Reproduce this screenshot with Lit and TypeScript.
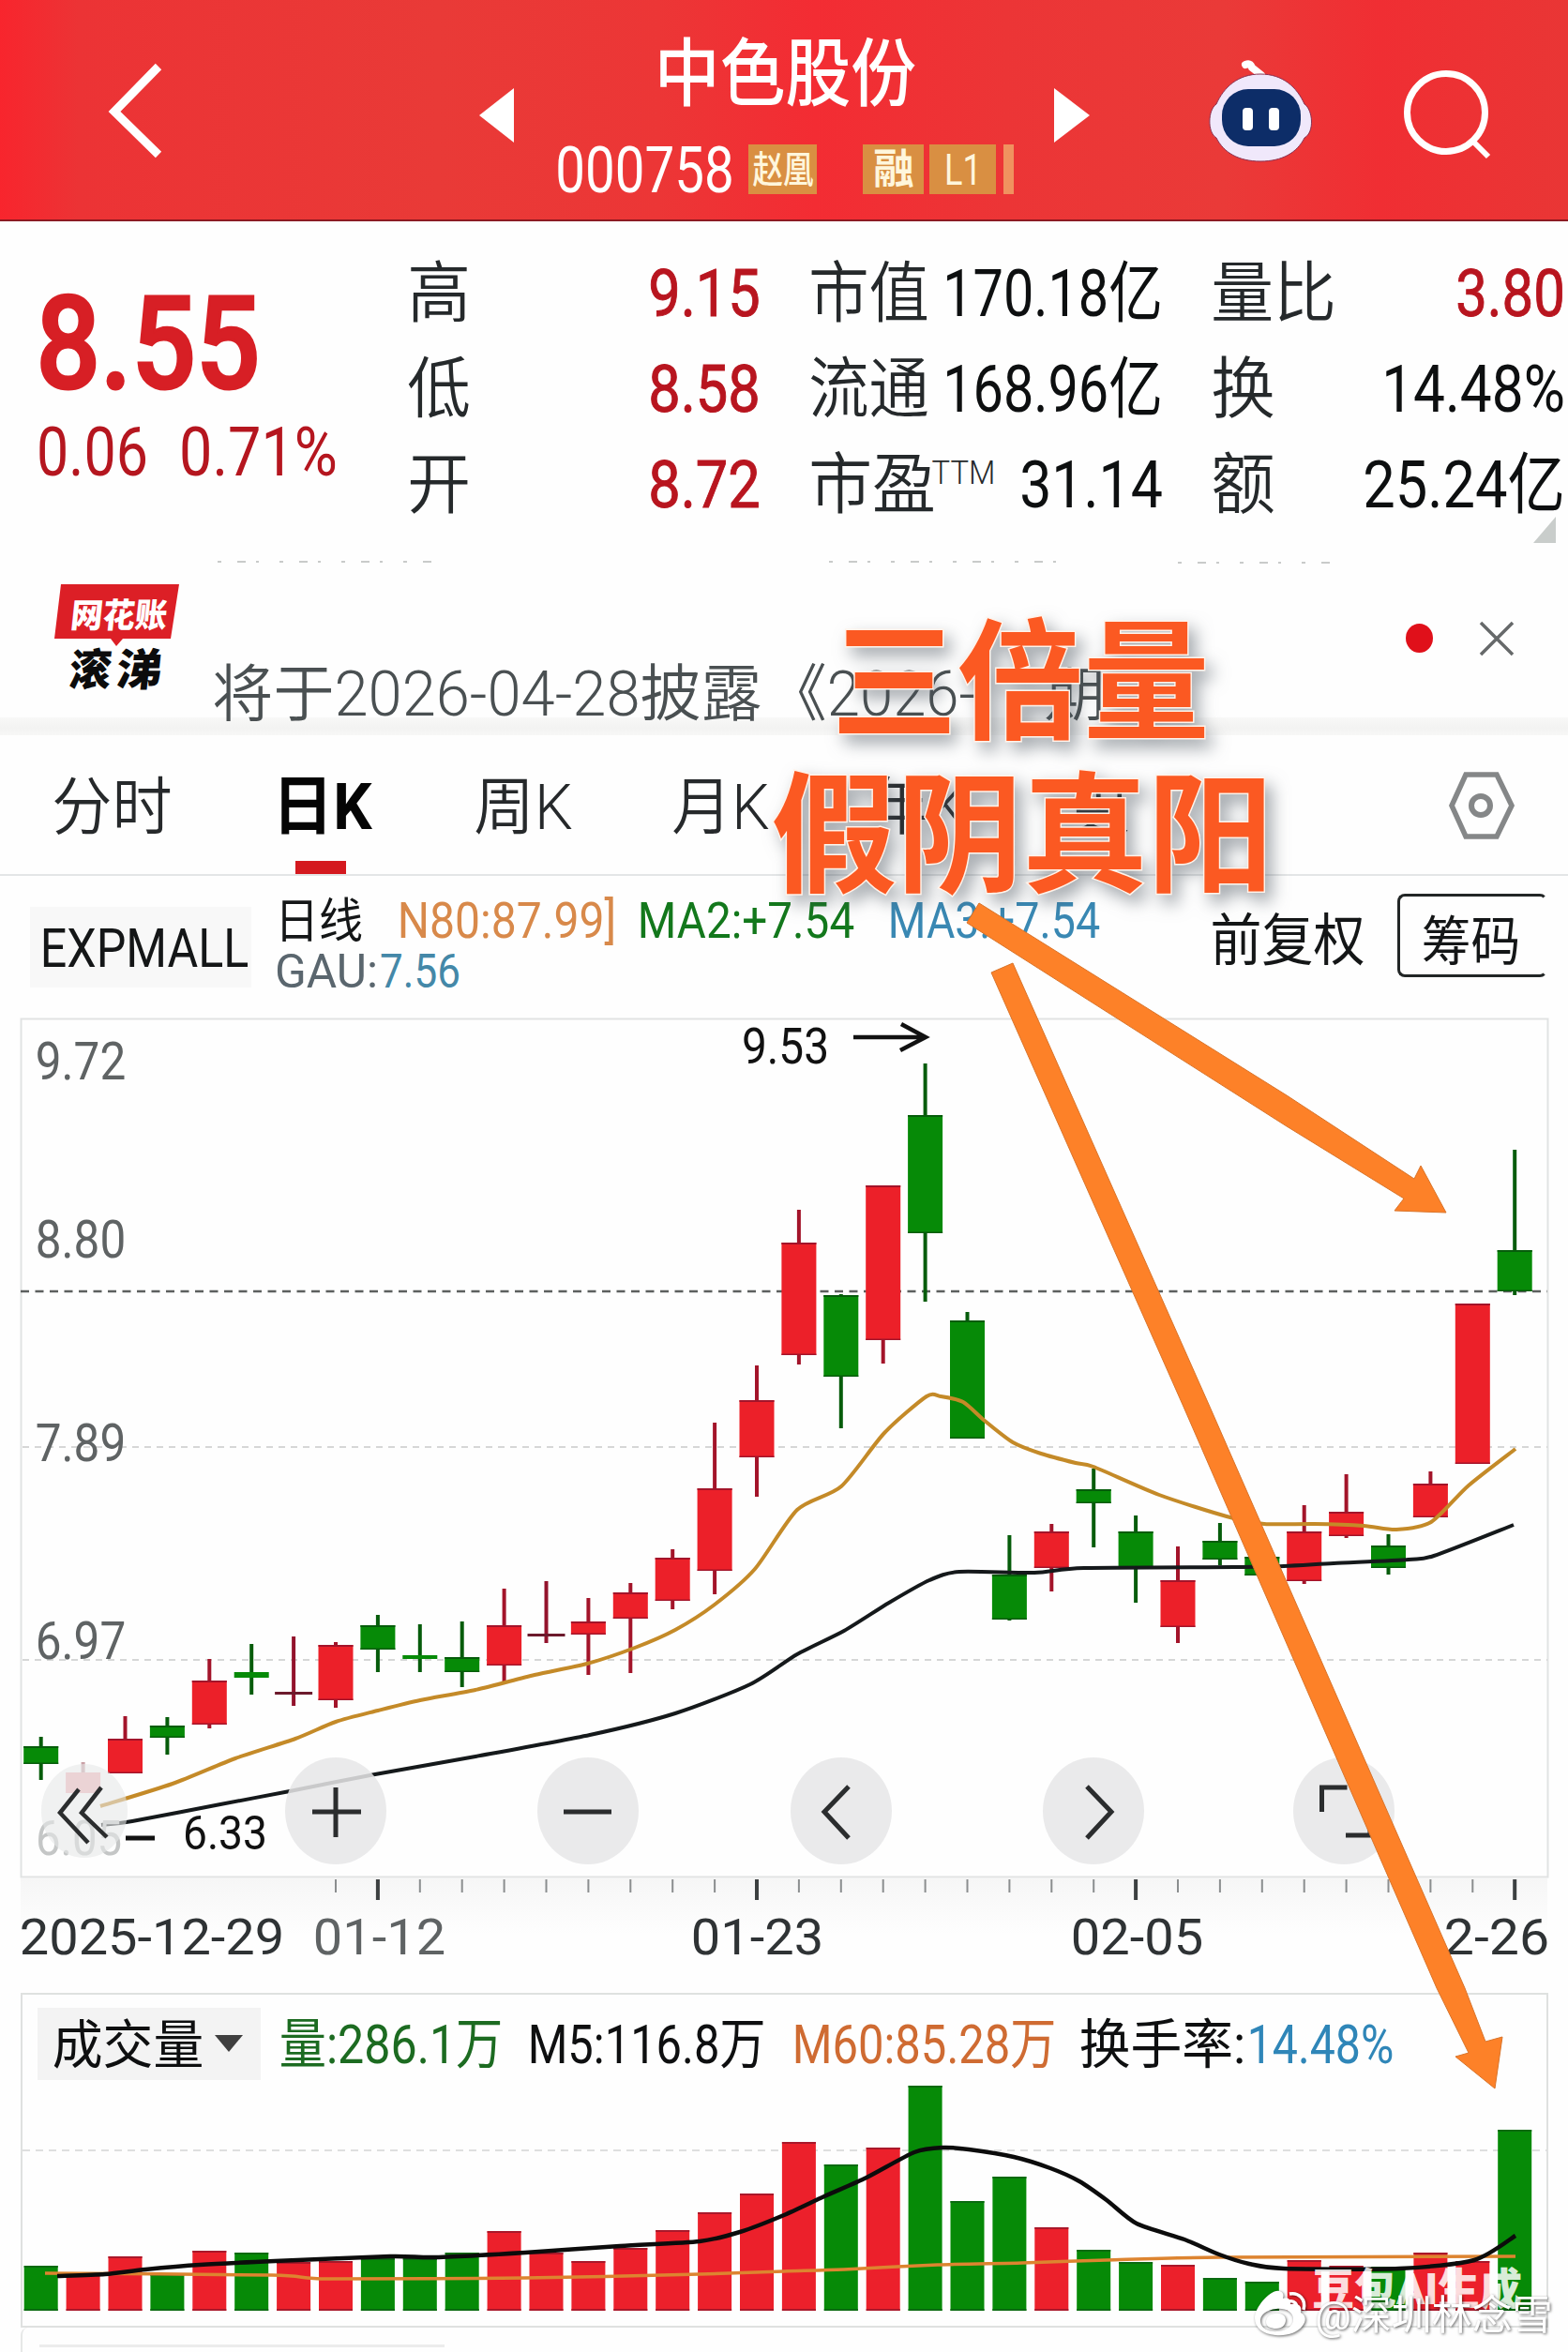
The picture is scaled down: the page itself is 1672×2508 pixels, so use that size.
import { LitElement, html, svg, css } from "lit";
import { customElement } from "lit/decorators.js";

/* Text whose ink fills a given width; the box ends on the baseline. */
const label = (text: string, w: number, size: number, cls = "") => {
  const h = Math.round(size * 0.711);
  const b = size * 0.04;
  return html`<svg class="label ${cls}" width=${w} height=${h} viewBox="0 0 ${w} ${h}">
    <text x=${-b} y=${h} font-size=${size} textLength=${w + 2 * b} lengthAdjust="spacingAndGlyphs">${text}</text>
  </svg>`;
};

const mark = (text: string, x: number, y: number, w: number, size: number, cls = "") => {
  const b = size * 0.04;
  return svg`<text class=${cls} x=${x - b} y=${y} font-size=${size} textLength=${w + 2 * b} lengthAdjust="spacingAndGlyphs">${text}</text>`;
};

type Candle = [string, number, number, number, number];
// colour, high, body top, body bottom, low
const candles: Candle[] = [
  ["g", 1851, 1861, 1880, 1897], ["f", 1878, 1889, 1911, 1911], ["r", 1829, 1853, 1890, 1890],
  ["g", 1830, 1839, 1852, 1870], ["r", 1768, 1791, 1838, 1842], ["g", 1752, 1782, 1788, 1806],
  ["d", 1744, 1803, 1806, 1818], ["r", 1750, 1753, 1812, 1820], ["g", 1721, 1732, 1758, 1782],
  ["g", 1731, 1764, 1768, 1782], ["g", 1728, 1766, 1782, 1798], ["r", 1693, 1732, 1775, 1792],
  ["d", 1685, 1741, 1744, 1751], ["r", 1703, 1728, 1742, 1785], ["r", 1687, 1697, 1725, 1783],
  ["r", 1651, 1660, 1706, 1715], ["r", 1516, 1586, 1674, 1699], ["r", 1455, 1492, 1553, 1595],
  ["r", 1289, 1324, 1444, 1454], ["g", 1379, 1380, 1467, 1522], ["r", 1263, 1263, 1428, 1453],
  ["g", 1133, 1188, 1314, 1387], ["g", 1398, 1407, 1533, 1533], ["g", 1636, 1678, 1726, 1727],
  ["r", 1624, 1632, 1671, 1696], ["g", 1565, 1587, 1602, 1649], ["g", 1615, 1632, 1672, 1708],
  ["r", 1648, 1684, 1734, 1751], ["g", 1623, 1642, 1662, 1668], ["g", 1657, 1659, 1679, 1679],
  ["r", 1604, 1632, 1685, 1688], ["r", 1571, 1611, 1637, 1639], ["g", 1635, 1647, 1671, 1678],
  ["r", 1568, 1581, 1617, 1617], ["r", 1389, 1389, 1560, 1560], ["g", 1225, 1332, 1376, 1380],
];
const volumes: [string, number][] = [
  ["g", 2415], ["r", 2423], ["r", 2405], ["g", 2424], ["r", 2399], ["g", 2401], ["r", 2411], ["r", 2410],
  ["g", 2407], ["g", 2407], ["g", 2401], ["r", 2378], ["r", 2401], ["r", 2410], ["r", 2396], ["r", 2377],
  ["r", 2358], ["r", 2338], ["r", 2283], ["g", 2307], ["r", 2289], ["g", 2223], ["g", 2346], ["g", 2320],
  ["r", 2374], ["g", 2398], ["g", 2411], ["r", 2414], ["g", 2428], ["g", 2432], ["r", 2409], ["r", 2415],
  ["g", 2416], ["r", 2401], ["r", 2410], ["g", 2270],
];
const cx = (i: number) => 43.7 + i * 44.9;

/* Smooth curve through the points (Catmull-Rom). */
const curve = (p: number[][]) => {
  let d = `M${p[0][0]} ${p[0][1]}`;
  for (let i = 0; i < p.length - 1; i++) {
    const a = p[Math.max(0, i - 1)], b = p[i], c = p[i + 1], e = p[Math.min(p.length - 1, i + 2)];
    const k = 8;
    d += `C${b[0] + (c[0] - a[0]) / k} ${b[1] + (c[1] - a[1]) / k} ${c[0] - (e[0] - b[0]) / k} ${c[1] - (e[1] - b[1]) / k} ${c[0]} ${c[1]}`;
  }
  return d;
};
const fastLine = curve([[107, 1925], [184, 1901], [251, 1874], [315, 1853], [358, 1835], [403, 1823], [448, 1812], [507, 1801], [570, 1785], [626, 1773], [677, 1756], [720, 1737], [762, 1710], [805, 1672], [850, 1609], [897, 1584], [943, 1527], [988, 1488], [1003, 1488], [1027, 1494], [1050, 1514], [1080, 1537], [1110, 1549], [1147, 1559], [1166, 1563], [1236, 1593], [1308, 1616], [1348, 1624], [1401, 1624], [1454, 1626], [1489, 1630], [1526, 1622], [1566, 1583], [1616, 1544]]);
const slowLine = curve([[108, 1945], [141, 1941], [235, 1923], [309, 1909], [400, 1891], [507, 1872], [629, 1849], [720, 1826], [800, 1795], [850, 1763], [900, 1738], [948, 1708], [991, 1684], [1023, 1675], [1103, 1676], [1156, 1671], [1316, 1670], [1369, 1669], [1422, 1666], [1502, 1662], [1529, 1658], [1614, 1625]]);
const vol5 = curve([[61, 2426], [112, 2424], [155, 2419], [213, 2414], [293, 2410], [416, 2405], [464, 2406], [560, 2401], [661, 2394], [746, 2389], [789, 2379], [836, 2361], [879, 2341], [924, 2321], [975, 2294], [1005, 2289], [1033, 2291], [1081, 2299], [1120, 2311], [1151, 2325], [1180, 2345], [1212, 2370], [1263, 2387], [1300, 2403], [1332, 2413], [1369, 2418], [1492, 2418], [1572, 2409], [1616, 2383]]);
const vol60 = curve([[48, 2423], [290, 2425], [350, 2429], [560, 2428], [746, 2424], [836, 2421], [900, 2419], [1000, 2414], [1090, 2412], [1180, 2409], [1300, 2406], [1616, 2405]]);

const shared = css`
  :host { display: block; font-family: Roboto, "Noto Sans CJK SC", sans-serif; }
  svg { display: block; flex: none; overflow: visible; }
  text { fill: currentColor; white-space: pre; }
  .label { font-weight: 400; }
  .med { font-weight: 500; }
  .bold { font-weight: 700; }
  .black { font-weight: 900; }
  .light { font-weight: 350; }
`;

@customElement("stock-header")
class StockHeader extends LitElement {
  static styles = [shared, css`
    .bar { display: flex; align-items: center; height: 236px; padding: 6px 0 2px 110px; box-sizing: border-box; color: #fff;
      border-bottom: 2px solid #8d1a22;
      background: linear-gradient(90deg, #f8252d 0, #ec3335 5%, #e93a37 28%, #ec3636 42%, #f32c33 52%, #ec3536 64%, #ea3a38 78%, #f02e33 88%, #e93635 100%); }
    .prev { margin-left: 326px; }
    .title { margin-left: 43px; width: 486px; height: 174px; padding-top: 19px; box-sizing: border-box; }
    .name { margin-left: 106px; }
    .row { display: flex; margin-top: 47px; height: 53px; align-items: center; }
    .row .code { margin-top: 1px; }
    .tag { background: #d98f42; height: 53px; display: flex; align-items: center; justify-content: center; color: #fff6dc; }
    .t1 { width: 73px; margin-left: 18px; }
    .t2 { width: 65px; margin-left: 49px; }
    .t3 { width: 71px; margin-left: 6px; }
    .t4 { width: 11px; margin-left: 8px; background: #f0925f; }
    .next { margin-left: 39px; }
    .robot { margin-left: 122px; }
    .search { margin-left: 90px; }
  `];
  render() {
    return html`<div class="bar">
      <svg width="70" height="112" viewBox="110 64 70 112" fill="none" stroke="#fff" stroke-width="9"><path d="M169 72 122 120l47 46"/></svg>
      <svg class="prev" width="46" height="72" viewBox="506 84 46 72"><path fill="#fff" d="M511 124 548 95v58z"/></svg>
      <div class="title">
        <div class="name">${label("中色股份", 273, 79, "med")}</div>
        <div class="row">
          <div class="code">${label("000758", 185, 68)}</div>
          <div class="tag t1">${label("赵凰", 62, 40, "med")}</div>
          <div class="tag t2">${label("融", 40, 44, "bold")}</div>
          <div class="tag t3">${label("L1", 36, 47)}</div>
          <div class="tag t4"></div>
        </div>
      </div>
      <svg class="next" width="46" height="72" viewBox="1120 84 46 72"><path fill="#fff" d="M1162 124 1124 95v58z"/></svg>
      <svg class="robot" width="114" height="120" viewBox="1290 60 114 120">
        <path d="M1330 70q5-2 7 3l10 8" fill="none" stroke="#fff" stroke-width="8" stroke-linecap="round"/>
        <path d="M1346 80c24 0 39 14 47 32 9 6 11 30 0 36-8 16-24 25-47 25s-39-9-47-25c-10-6-9-30 0-36 8-18 23-32 47-32z" fill="#f0e8fb" stroke="#8a3050" stroke-width="1"/>
        <rect x="1305" y="96" width="84" height="61" rx="28" fill="#0d2d68"/>
        <rect x="1327" y="116" width="11" height="24" rx="4" fill="#fff"/><rect x="1355" y="116" width="11" height="24" rx="4" fill="#fff"/>
      </svg>
      <svg class="search" width="100" height="100" viewBox="1494 70 100 100" fill="none" stroke="#fff">
        <circle cx="1544" cy="121" r="41.500" stroke-width="7"/><path d="M1572 151l17 17" stroke-width="6"/>
      </svg>
    </div>`;
  }
}

@customElement("quote-panel")
class QuotePanel extends LitElement {
  static styles = [shared, css`
    .panel { display: flex; height: 354px; padding-left: 42px; box-sizing: border-box; color: #0d0f10; }
    .price { width: 395px; padding-top: 80px; box-sizing: border-box; color: #b5161f; }
    .big { color: #d71f25; margin-left: 2px; }
    .big .label { stroke: #d71f25; stroke-width: 3px; }
    .chg { display: flex; gap: 39px; margin-top: 42px; }
    .col { display: grid; grid-template-rows: 101px 102px 102px; margin-right: 57px; }
    .c1 { width: 371px; } .c2 { width: 372px; } .c3 { width: 372px; margin-right: 0; }
    .row { display: flex; justify-content: space-between; align-items: flex-end; }
    .row .k { display: flex; align-items: flex-start; color: #25292b; }
    .red { color: #b8151f; stroke: #b8151f; stroke-width: 1px; }
    .corner { margin: 10px 7px 0 auto; }
  `];
  render() {
    const row = (k: unknown, v: unknown) => html`<div class="row"><div class="k">${k}</div>${v}</div>`;
    return html`<div class="panel">
      <div class="price">
        <div class="big">${label("8.55", 228, 138, "med")}</div>
        <div class="chg">${label("0.06", 113, 72)}${label("0.71%", 163, 72)}</div>
      </div>
      <div class="col c1">
        ${row(label("高", 62, 71, "light"), label("9.15", 114, 71, "red"))}
        ${row(label("低", 62, 71, "light"), label("8.58", 114, 71, "red"))}
        ${row(label("开", 62, 71, "light"), label("8.72", 114, 71, "red"))}
      </div>
      <div class="col c2">
        ${row(label("市值", 123, 71, "light"), label("170.18亿", 229, 71))}
        ${row(label("流通", 123, 71, "light"), label("168.96亿", 229, 71))}
        ${row(html`${label("市盈", 130, 71, "light")}${label("TTM", 65, 35, "light")}`, label("31.14", 147, 71))}
      </div>
      <div class="col c3">
        ${row(label("量比", 128, 71, "light"), label("3.80", 111, 71, "red"))}
        ${row(label("换", 63, 71, "light"), label("14.48%", 190, 71))}
        ${row(label("额", 63, 71, "light"), label("25.24亿", 210, 71))}
        <svg class="corner" width="24" height="28"><path d="M24 0v28H0z" fill="#c9cdcb"/></svg>
      </div>
    </div>`;
  }
}

@customElement("news-strip")
class NewsStrip extends LitElement {
  static styles = [shared, css`
    .strip { display: flex; align-items: flex-end; height: 175px; padding-left: 56px; box-sizing: border-box; color: #4a5052; }
    .logo { margin-bottom: 27px; }
    .a { margin: 0 11px 2px 37px; }
    .b { margin: 0 77px 2px 0; }
    .c { margin-bottom: 2px; }
    .dot { width: 29px; height: 31px; border-radius: 50%; background: #e0101a; margin: 0 67px 69px 323px; }
    .close { margin-bottom: 66px; }
    .band { height: 19px; background: linear-gradient(#f8f8f7, #f3f3f2 60%, #f7f7f6); }
  `];
  render() {
    return html`<div class="strip">
      <svg class="logo" width="136" height="118" viewBox="56 620 136 118">
        <path d="M232 599H460M884 599h246M1256 600h170" stroke="#c9cbca" stroke-width="2" stroke-dasharray="4 17 9 11 3 22"/>
        <path d="M65 623H191L182 681H131L124 689 118 681H58z" fill="#dc1f26"/>
        <g transform="skewX(-6)" >
          <g color="#fff">${mark("网花账", 146, 669, 100, 36, "black")}</g>
          <g color="#0c0c0c">${mark("滚", 151, 731, 41, 47, "black")}${mark("涕", 201, 731, 45, 47, "black")}</g>
        </g>
      </svg>
      <div class="a">${label("将于2026-04-28披露", 581, 66, "light")}</div>
      <div class="b">${label("《2026-", 217, 66, "light")}</div>
      <div class="c">${label("期", 61, 62, "light")}</div>
      <div class="dot"></div>
      <svg class="close" width="36" height="36" stroke="#66696a" stroke-width="3.500"><path d="M1 1 35 35M35 1 1 35" transform="translate(-17 0)"/></svg>
    </div><div class="band"></div>`;
  }
}

@customElement("period-tabs")
class PeriodTabs extends LitElement {
  static styles = [shared, css`
    .tabs { display: flex; align-items: flex-end; height: 150px; padding: 0 58px 48px 58px; box-sizing: border-box; border-bottom: 2px solid #e3e5e6; color: #26292b; }
    .tab { margin-right: 111px; }
    .on { color: #050505; margin-right: 114px; display: flex; flex-direction: column; height: 49px; }
    .on::after { content: ""; flex: none; width: 54px; height: 14px; background: #d4191f; margin: 34px 0 0 22px; }
    .t1 { margin-right: 112px; }
    .set { margin: 0 0 -11px auto; }
  `];
  render() {
    return html`<div class="tabs">
      <div class="tab t1">${label("分时", 123, 67, "light")}</div>
      <div class="on">${label("日K", 101, 69, "bold")}</div>
      <div class="tab">${label("周K", 100, 67, "light")}</div>
      <div class="tab">${label("月K", 99, 67, "light")}</div>
      <div class="tab">${label("年K", 100, 67, "light")}</div>
      <div class="more">${label("更", 62, 67, "light")}</div>
      <svg class="set" width="70" height="72" viewBox="1546 823 70 72" fill="none" stroke="#858788">
        <path d="M1565 826h33l16 33-16 33h-33l-15-33z" stroke-width="5.500"/><circle cx="1581" cy="859" r="10" stroke-width="6"/>
      </svg>
    </div>`;
  }
}

@customElement("indicator-bar")
class IndicatorBar extends LitElement {
  static styles = [shared, css`
    .bar { display: flex; align-items: flex-start; height: 151px; padding: 19px 22px 0 32px; box-sizing: border-box; color: #141617; }
    .pill { margin-top: 14px; width: 236px; height: 86px; padding: 23px 0 0 13px; box-sizing: border-box; background: #f8f8f8; }
    .mas { margin-left: 27px; width: 876px; }
    .top, .sub { display: flex; align-items: flex-end; }
    .top { height: 47px; }
    .o { color: #d8894a; margin-left: 41px; } .g { color: #13781c; margin-left: 27px; } .b { color: #3988b3; margin-left: 40px; }
    .sub { margin-top: 17px; }
    .gau { color: #5a666e; margin-right: 6px; } .gv { color: #4488a8; }
    .adj { margin: 28px 37px 0 122px; }
    .chip { width: 160px; height: 89px; box-sizing: border-box; border: 3px solid #222626; border-right-color: transparent; border-radius: 8px; padding: 27px 0 0 25px; }
  `];
  render() {
    return html`<div class="bar">
      <div class="pill">${label("EXPMALL", 218, 57)}</div>
      <div class="mas">
        <div class="top">${label("日线", 90, 51)}<div class="o">${label("N80:87.99]", 229, 54)}</div><div class="g">${label("MA2:+7.54", 227, 54)}</div><div class="b">${label("MA3:+7.54", 222, 54)}</div></div>
        <div class="sub"><div class="gau">${label("GAU:", 106, 50)}</div><div class="gv">${label("7.56", 82, 50)}</div></div>
      </div>
      <div class="adj">${label("前复权", 160, 60)}</div>
      <div class="chip">${label("筹码", 101, 57)}</div>
    </div>`;
  }
}

@customElement("candle-chart")
class CandleChart extends LitElement {
  static styles = [shared, css`
    .r { fill: #ec2029; } .g { fill: #068a07; } .f { fill: #f3b3ba; } .d { fill: #6c1a2c; }
    .wr { fill: #a3142a; } .wg { fill: #065c0b; } .wf { fill: #c9a0a6; } .wd { fill: #93132c; }
    .axis { color: #5f6364; } .date { color: #2f3335; } .ink { color: #111; } .faint { color: #c4c6c6; }
  `];
  render() {
    const bodyWidth = (c: string) => (c === "d" ? 40 : 37);
    return html`<svg width="1672" height="1040" viewBox="0 1084 1672 1040">
      <defs><linearGradient id="fade" x1="0" y1="0" x2="0" y2="1"><stop offset="0" stop-color="#f6f6f6"/><stop offset="1" stop-color="#fefefe"/></linearGradient></defs>
      <rect x="22" y="2002" width="1628" height="60" fill="url(#fade)"/>
      <rect x="22.500" y="1085.500" width="1628" height="915" fill="none" stroke="#e1e3e3" stroke-width="2"/>
      <path d="M24 1542H1650M24 1769H1650" stroke="#d6d7d7" stroke-width="2" stroke-dasharray="7 6"/>
      <path d="M22 1376H1650" stroke="#5d605f" stroke-width="2.500" stroke-dasharray="9 6.500"/>
      ${candles.map(([c, hi, t, b, lo], i) => svg`
        <rect class="w${c}" x=${cx(i) - 2} y=${hi} width="4" height=${lo - hi}/>
        <rect class=${c} x=${cx(i) - bodyWidth(c) / 2} y=${t} width=${bodyWidth(c)} height=${b - t}/>
        ${b - t > 8 && c !== "f" ? svg`<rect class="w${c}" x=${cx(i) - 18.5} y=${t} width="37" height="2"/><rect class="w${c}" x=${cx(i) - 18.5} y=${b - 1.5} width="37" height="1.500"/>` : ""}`)}
      <path d=${slowLine} fill="none" stroke="#15191b" stroke-width="4"/>
      <path d=${fastLine} fill="none" stroke="#c48a28" stroke-width="4"/>
      <g class="axis">
        ${mark("9.72", 40, 1150, 92, 55)}${mark("8.80", 40, 1340, 92, 55)}${mark("7.89", 40, 1557, 92, 55)}${mark("6.97", 40, 1768, 92, 55)}
      </g>
      <g class="faint">${mark("6.05", 40, 1977, 88, 52)}</g>
      <path d="M134 1959h31" stroke="#111" stroke-width="5"/>
      <g class="ink">${mark("6.33", 197, 1971, 86, 50)}${mark("9.53", 793, 1133, 89, 53)}</g>
      <path d="M910 1105h76M961 1091l26 14-27 14" fill="none" stroke="#111" stroke-width="4.500"/>
      <g fill="#e6e7e8" fill-opacity=".86">
        <ellipse cx="90" cy="1930" rx="46" ry="50" fill-opacity=".6"/>
        ${[358, 627, 897, 1166, 1433].map((x) => svg`<ellipse cx=${x} cy="1930" rx="54" ry="57"/>`)}
      </g>
      <g fill="none" stroke="#2b2d2e" stroke-width="5">
        <path d="M84 1907 64 1932 94 1964M108 1905 87 1932 114 1958" stroke-width="4.500"/>
        <path d="M333 1931h52M358 1905v53M601 1931h51M905 1904 879 1931 905 1959M1159 1904l26 27-26 28M1409.500 1931v-26h27M1435 1956h26v-26" stroke-width="5"/>
      </g>
      ${Array.from({ length: 29 }, (_, k) => k + 7).map((i) => {
        const major = (i + 1) % 9 === 0;
        return svg`<rect x=${cx(i) - (major ? 2 : 1)} y="2003" width=${major ? 4 : 2} height=${major ? 22 : 14} fill=${major ? "#3c4041" : "#8b8e8f"}/>`;
      })}
      <g class="date">
        ${mark("2025-12-29", 23, 2083, 278, 54)}${mark("01-23", 739, 2083, 137, 54)}${mark("02-05", 1144, 2083, 137, 54)}${mark("2-26", 1542, 2083, 108, 54)}
      </g>
      <g class="axis">${mark("01-12", 336, 2083, 137, 54)}</g>
    </svg>`;
  }
}

@customElement("volume-chart")
class VolumeChart extends LitElement {
  static styles = [shared, css`
    .box { margin-left: 22px; width: 1629px; height: 357px; box-sizing: border-box; border: 2px solid #dfe1e0; padding: 14px 0 0 16px; }
    .head { display: flex; align-items: flex-end; height: 77px; color: #0e0f10; }
    .pill { display: flex; align-items: flex-end; gap: 14px; width: 238px; height: 77px; padding: 0 18px 18px; box-sizing: border-box; background: #f3f3f3; }
    .tri { margin-bottom: 12px; }
    .n { margin-bottom: 18px; }
    .v { color: #1c6b21; margin-left: 22px; } .m5 { margin-left: 31px; } .m60 { color: #cf6b32; margin-left: 33px; }
    .k { margin-left: 29px; } .p { color: #2f86b8; margin-left: 6px; }
    .plot { margin-left: -40px; }
    .r { fill: #ec202b; } .g { fill: #068a07; }
    .rt { fill: #a9182a; } .gt { fill: #0a6a10; }
    .next { margin-left: 22px; width: 1628px; height: 26px; border-left: 2px solid #e6e8e7; border-radius: 8px 0 0 0; padding: 18px 0 0 18px; box-sizing: border-box; }
    .line { width: 432px; height: 3px; background: #ececec; }
  `];
  render() {
    return html`<div class="box">
      <div class="head">
        <div class="pill">${label("成交量", 157, 56)}<svg class="tri" width="30" height="18"><path d="M0 0h30L15 18z" fill="#3f3f3f"/></svg></div>
        <div class="n v">${label("量:286.1万", 234, 58)}</div>
        <div class="n m5">${label("M5:116.8万", 249, 58)}</div>
        <div class="n m60">${label("M60:85.28万", 277, 58)}</div>
        <div class="n k">${label("换手率:", 173, 57)}</div>
        <div class="n p">${label("14.48%", 152, 58)}</div>
      </div>
      <svg class="plot" width="1672" height="246" viewBox="0 2217 1672 246">
        <path d="M24 2292H1650" stroke="#dedfdf" stroke-width="2" stroke-dasharray="8 6"/>
        ${volumes.map(([c, t], i) => svg`<rect class=${c} x=${cx(i) - 18} y=${t} width="36" height=${2463 - t}/><rect class="${c}t" x=${cx(i) - 18} y=${t} width="36" height="2"/><rect class="${c}t" x=${cx(i) - 18} y="2461" width="36" height="2"/>`)}
        <path d=${vol60} fill="none" stroke="#dd8430" stroke-width="3.500"/>
        <path d=${vol5} fill="none" stroke="#0c0c0c" stroke-width="4.500"/>
      </svg>
    </div>
    <div class="next"><div class="line"></div></div>`;
  }
}

@customElement("app-root")
class AppRoot extends LitElement {
  static styles = [shared, css`
    :host { position: relative; width: 1672px; height: 2508px; overflow: hidden; background: #fefefe; }
    .overlay { position: absolute; left: 0; top: 0; }
    .note { color: #fb5922; font-weight: 700; paint-order: stroke; stroke: #fff3ea; stroke-width: 3px; filter: drop-shadow(7px 9px 9px rgba(70, 80, 90, .5)); }
    .mark { color: rgba(255, 255, 255, .85); font-weight: 900; }
    .user { color: #fff; filter: drop-shadow(1px 1px 1.500px rgba(0, 0, 0, .6)); }
  `];
  render() {
    return html`
      <stock-header></stock-header>
      <quote-panel></quote-panel>
      <news-strip></news-strip>
      <period-tabs></period-tabs>
      <indicator-bar></indicator-bar>
      <candle-chart></candle-chart>
      <volume-chart></volume-chart>
      <svg class="overlay" width="1672" height="2508" viewBox="0 0 1672 2508">
        <g class="note">${mark("三倍量", 892, 777, 392, 139)}${mark("假阴真阳", 828, 940, 524, 139)}</g>
        <g fill="#fd8128" stroke="#d9742a" stroke-width="1">
          <path d="M1044 963 1372 1168 1508 1257 1515 1243 1542 1293 1487 1291 1497 1278 1372 1201 1031 984z"/>
          <path d="M1080 1027 1290 1500 1562 2120 1584 2177 1602 2172 1594 2227 1552 2193 1566 2189 1532 2120 1262 1500 1057 1037z"/>
        </g>
        <g class="mark">${mark("豆包AI生成", 1401, 2457, 220, 46)}</g>
        <g class="user">
          <path fill="#fff" fill-rule="evenodd" d="M1368 2451c4-2 9 0 8 6 8-2 13 2 11 9 6 3 6 9 2 14-6 8-17 11-29 10-13-1-22-8-22-18 0-12 17-31 26-29 5 1 5 5 4 8zM1361 2462c-11 1-18 7-17 14s9 11 19 10 17-7 16-14-8-11-18-10zM1360 2467c6-1 11 2 11 7s-4 9-10 9-11-2-11-7 4-9 10-9z"/>
          <path d="M1375 2446c10-2 18 6 15 17M1375 2454c5-1 9 3 7 8" fill="none" stroke="#fff" stroke-width="3.500"/>
          <circle cx="1358" cy="2476" r="4" fill="#fff"/>
          ${mark("@深圳林念雪", 1404, 2484, 250, 43)}
        </g>
      </svg>`;
  }
}
